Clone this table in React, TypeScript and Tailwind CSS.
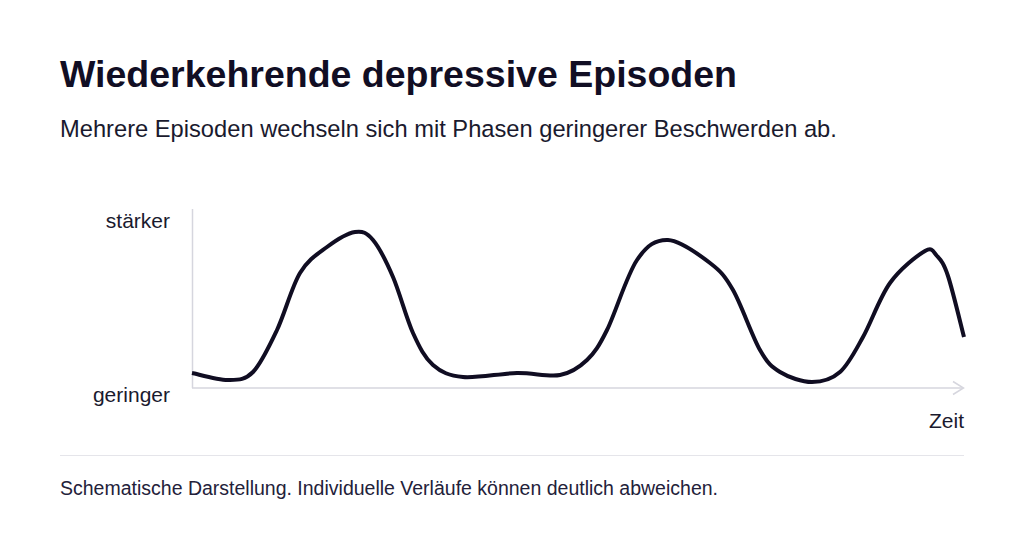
import React from 'react';

// Chart points, in SVG coordinates (772 x 200)
const points: Array<[number, number]> = [
  [0, 173], [36, 180], [61, 172], [85, 130], [108, 73], [135, 47], [163, 32], [181, 40],
  [201, 77], [221, 133], [241, 165], [271, 177], [325, 173], [368, 175], [395, 160],
  [415, 130], [445, 60], [476, 40], [518, 63], [541, 90], [568, 150], [588, 172],
  [620, 182], [648, 172], [671, 137], [698, 83], [733, 51], [745, 56], [756, 76], [772, 137],
];

const smoothPath = (pts: Array<[number, number]>) => {
  let d = `M ${pts[0][0]} ${pts[0][1]}`;
  for (let i = 0; i < pts.length - 1; i++) {
    const p0 = pts[i - 1] || pts[i];
    const p1 = pts[i];
    const p2 = pts[i + 1];
    const p3 = pts[i + 2] || p2;
    const c1x = p1[0] + (p2[0] - p0[0]) / 6;
    const c1y = p1[1] + (p2[1] - p0[1]) / 6;
    const c2x = p2[0] - (p3[0] - p1[0]) / 6;
    const c2y = p2[1] - (p3[1] - p1[1]) / 6;
    d += ` C ${c1x} ${c1y}, ${c2x} ${c2y}, ${p2[0]} ${p2[1]}`;
  }
  return d;
};

const EpisodeChart: React.FC = () => (
  <div className="mt-[57px]">
    <div className="flex">
      <div className="w-[132px] h-[205px] pr-[22px] pt-[10px] flex flex-col justify-between items-end text-[21px] leading-none text-[#1a1a2e]">
        <span>stärker</span>
        <span>geringer</span>
      </div>
      <svg width="772" height="200" viewBox="0 0 772 200" className="block overflow-visible">
        <line x1="0.5" y1="9" x2="0.5" y2="188" stroke="#d6d6de" strokeWidth="1.5" />
        <line x1="0" y1="188" x2="771" y2="188" stroke="#d6d6de" strokeWidth="1.5" />
        <polyline points="761,181.5 771.5,188 761,194.5" fill="none" stroke="#d6d6de" strokeWidth="1.5" />
        <path d={smoothPath(points)} fill="none" stroke="#100d22" strokeWidth="4" strokeLinejoin="round" />
      </svg>
    </div>
    <div className="mt-[5px] text-right text-[21px] leading-none text-[#1a1a2e]">Zeit</div>
  </div>
);

const App: React.FC = () => {
  return (
    <div className="w-[1024px] h-[546px] bg-white overflow-hidden px-[60px] pt-[52px] font-['Liberation_Sans',Arial,sans-serif]">
      <h1 className="text-[37.5px] leading-[44px] font-bold text-[#110e24]">Wiederkehrende depressive Episoden</h1>
      <p className="mt-[19px] text-[23.7px] leading-[28px] text-[#1a1a2e]">
        Mehrere Episoden wechseln sich mit Phasen geringerer Beschwerden ab.
      </p>
      <EpisodeChart />
      <div className="mt-[24px] border-t border-[#e5e5ea]" />
      <p className="mt-[20px] text-[19.5px] leading-[24px] text-[#23213a]">
        Schematische Darstellung. Individuelle Verläufe können deutlich abweichen.
      </p>
    </div>
  );
};

export default App;
